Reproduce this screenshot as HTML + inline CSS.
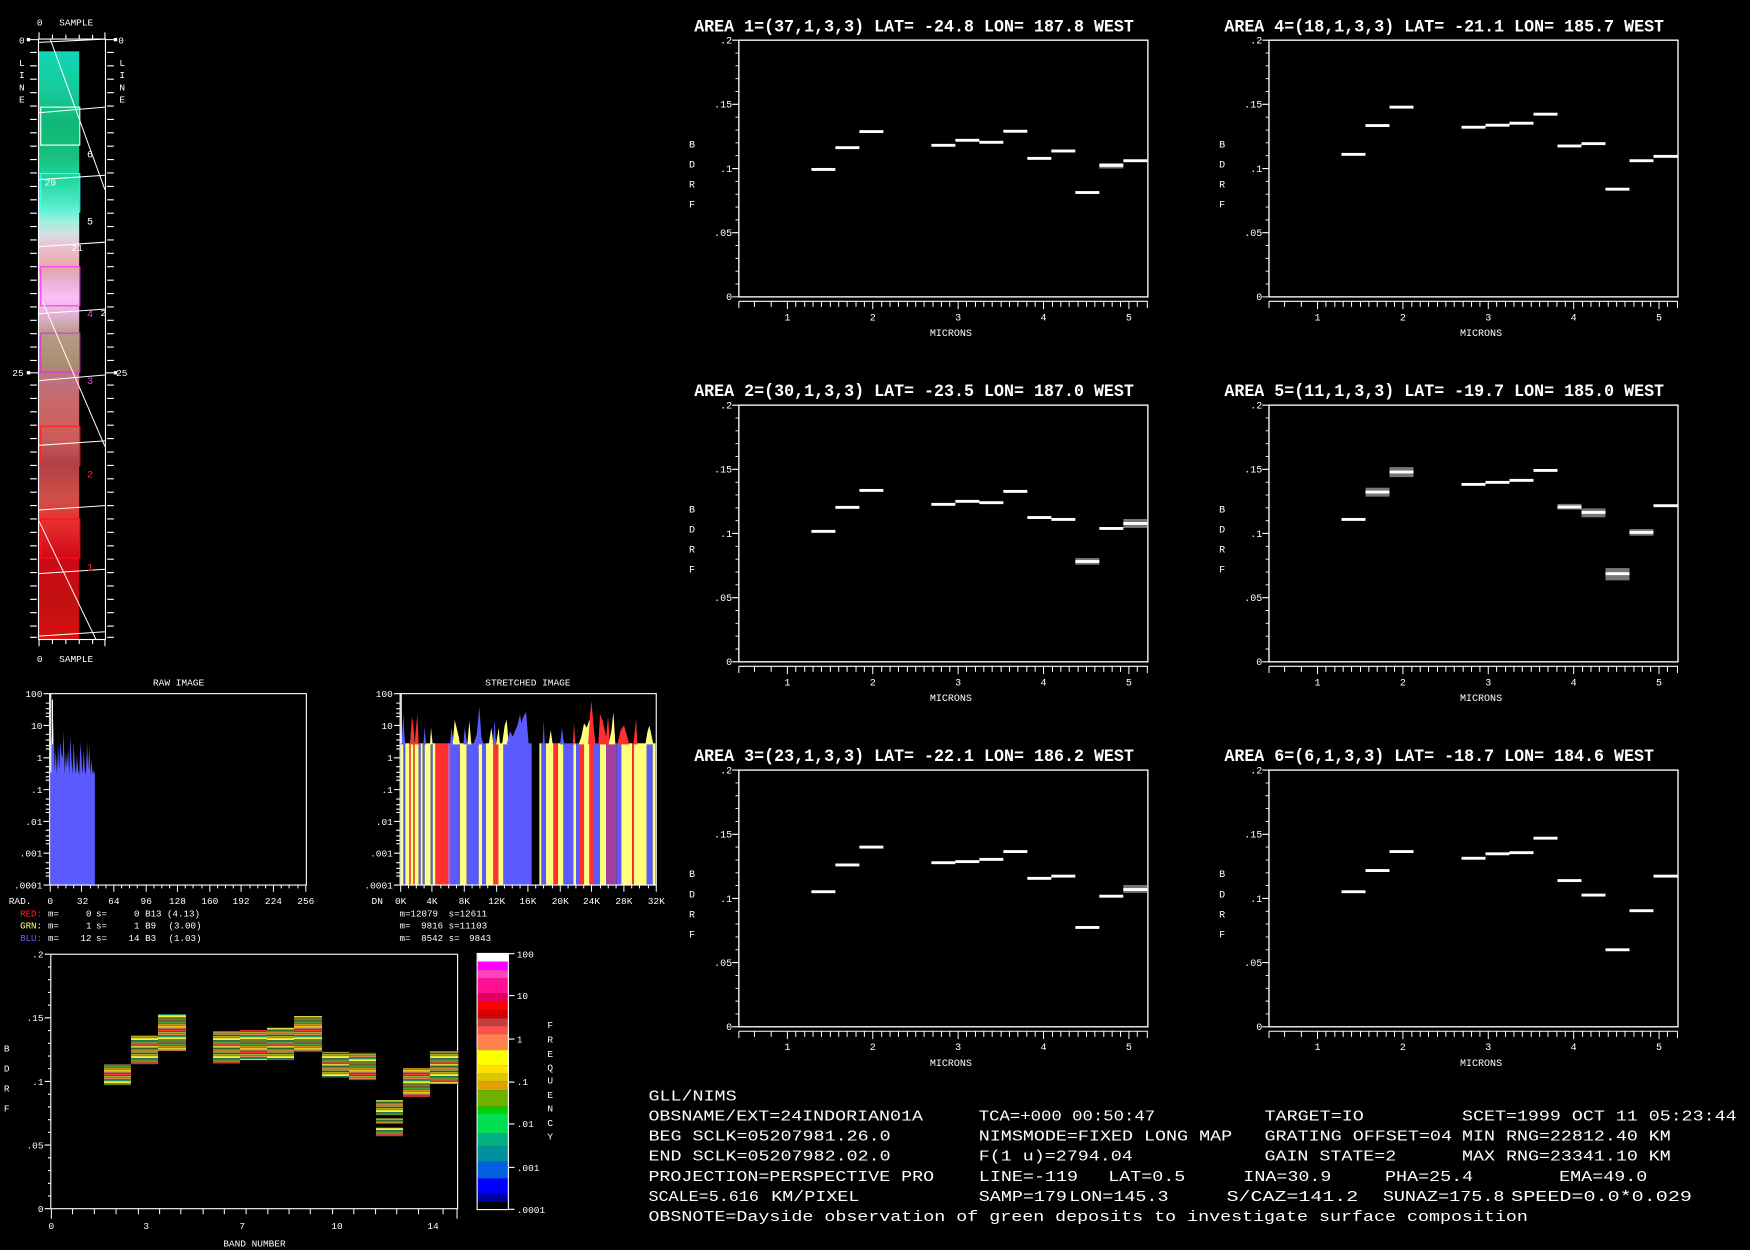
<!DOCTYPE html>
<html><head><meta charset="utf-8"><style>
html,body{margin:0;padding:0;background:#000;width:1750px;height:1250px;overflow:hidden}
svg{display:block}
text{font-family:"Liberation Mono","DejaVu Sans Mono",monospace;fill:#fff}
</style></head><body>
<svg width="1750" height="1250" viewBox="0 0 1568 1120" preserveAspectRatio="none" xmlns="http://www.w3.org/2000/svg">
<defs>
<linearGradient id="strip" x1="0" y1="46" x2="0" y2="573" gradientUnits="userSpaceOnUse">
<stop offset="0" stop-color="#10d8b8"/><stop offset="0.07" stop-color="#18c898"/><stop offset="0.12" stop-color="#10b878"/>
<stop offset="0.18" stop-color="#18c080"/><stop offset="0.22" stop-color="#20d8a0"/><stop offset="0.26" stop-color="#50ecc8"/>
<stop offset="0.29" stop-color="#a0f0e0"/><stop offset="0.31" stop-color="#d0e0e0"/><stop offset="0.33" stop-color="#f0c0d0"/>
<stop offset="0.37" stop-color="#e0a8a8"/><stop offset="0.39" stop-color="#e8b0d0"/><stop offset="0.42" stop-color="#fcc0f8"/>
<stop offset="0.45" stop-color="#e0b0d0"/><stop offset="0.48" stop-color="#b89a88"/><stop offset="0.53" stop-color="#a89070"/>
<stop offset="0.56" stop-color="#c07080"/><stop offset="0.6" stop-color="#c86868"/><stop offset="0.66" stop-color="#cc5c58"/>
<stop offset="0.7" stop-color="#b04048"/><stop offset="0.76" stop-color="#d05048"/><stop offset="0.8" stop-color="#e83030"/>
<stop offset="0.86" stop-color="#d00818"/><stop offset="0.93" stop-color="#c01010"/><stop offset="1" stop-color="#d81010"/>
</linearGradient>
<pattern id="stA" width="100" height="66" patternUnits="userSpaceOnUse">
<rect width="100" height="66" fill="#000"/>
<rect y="0" width="100" height="5" fill="#50b040"/><rect y="6" width="100" height="5" fill="#e0a020"/>
<rect y="12" width="100" height="5" fill="#ffe020"/><rect y="18" width="100" height="4" fill="#c08060"/>
<rect y="23" width="100" height="5" fill="#ff3030"/><rect y="29" width="100" height="4" fill="#a0c040"/>
<rect y="34" width="100" height="5" fill="#f09050"/><rect y="40" width="100" height="4" fill="#20a080"/>
<rect y="45" width="100" height="6" fill="#ffff40"/><rect y="52" width="100" height="4" fill="#80a030"/>
<rect y="57" width="100" height="4" fill="#e06040"/><rect y="62" width="100" height="3" fill="#30c060"/>
</pattern>
<pattern id="stB" width="100" height="54" patternUnits="userSpaceOnUse">
<rect width="100" height="54" fill="#000"/>
<rect y="0" width="100" height="5" fill="#c0c020"/><rect y="6" width="100" height="6" fill="#ffee30"/>
<rect y="13" width="100" height="4" fill="#20a090"/><rect y="18" width="100" height="5" fill="#70b030"/>
<rect y="24" width="100" height="4" fill="#ff5050"/><rect y="29" width="100" height="6" fill="#d8d040"/>
<rect y="37" width="100" height="4" fill="#40c040"/><rect y="42" width="100" height="5" fill="#f0a040"/>
<rect y="48" width="100" height="4" fill="#a0a060"/>
</pattern>
<g id="axes">
<rect x="662" y="36" width="366.5" height="230" fill="none" stroke="#fff" stroke-width="1.2"/>
<path d="M656 36H662M656 93.5H662M656 151H662M656 208.5H662M656 266H662" stroke="#fff" stroke-width="1"/>
<path d="M659 47.5H662M659 59H662M659 70.5H662M659 82H662M659 105H662M659 116.5H662M659 128H662M659 139.5H662M659 162.5H662M659 174H662M659 185.5H662M659 197H662M659 220H662M659 231.5H662M659 243H662M659 254.5H662" stroke="#fff" stroke-width="0.8"/>
<text x="656" y="39" font-size="9" text-anchor="end">.2</text>
<text x="656" y="96.5" font-size="9" text-anchor="end">.15</text>
<text x="656" y="154" font-size="9" text-anchor="end">.1</text>
<text x="656" y="211.5" font-size="9" text-anchor="end">.05</text>
<text x="656" y="269" font-size="9" text-anchor="end">0</text>
<text x="620" y="132" font-size="9" text-anchor="middle">B</text>
<text x="620" y="150" font-size="9" text-anchor="middle">D</text>
<text x="620" y="168" font-size="9" text-anchor="middle">R</text>
<text x="620" y="186" font-size="9" text-anchor="middle">F</text>
<path d="M662 270H1028.5" stroke="#fff" stroke-width="1"/>
<path d="M662 270v6M676 270v5M691 270v5M705.5 270v7M713 270v5M721 270v5M728.5 270v5M736 270v5M744 270v5M751.5 270v5M759 270v5M767 270v5M774.5 270v5M782 270v7M790 270v5M797.5 270v5M805 270v5M813 270v5M820.5 270v5M828 270v5M836 270v5M843.5 270v5M851 270v5M858.5 270v7M866 270v5M874 270v5M881.5 270v5M889 270v5M897 270v5M904.5 270v5M912 270v5M920 270v5M927.5 270v5M935 270v7M943 270v5M950.5 270v5M958 270v5M966 270v5M973.5 270v5M981 270v5M989 270v5M996.5 270v5M1004 270v5M1011.5 270v7M1019 270v5M1028 270v6" stroke="#fff" stroke-width="0.9"/>
<text x="705.5" y="287" font-size="9" text-anchor="middle">1</text>
<text x="782" y="287" font-size="9" text-anchor="middle">2</text>
<text x="858.5" y="287" font-size="9" text-anchor="middle">3</text>
<text x="935" y="287" font-size="9" text-anchor="middle">4</text>
<text x="1011.5" y="287" font-size="9" text-anchor="middle">5</text>
<text x="852" y="301" font-size="9" text-anchor="middle">MICRONS</text>
</g>
</defs>
<rect width="1568" height="1120" fill="#000"/>

<!-- LEFT IMAGE STRIP -->
<rect x="34.5" y="46" width="36.5" height="527" fill="url(#strip)"/>
<rect x="34.5" y="35" width="60" height="538" fill="none" stroke="#fff" stroke-width="1"/>
<path d="M35 29V35M47 31v4M59 31v4M71 31v4M83 31v4M94 29v6M35 573v6M47 573v4M59 573v4M71 573v4M83 573v4M94 573v6" stroke="#fff" stroke-width="1"/>
<g stroke="#fff" stroke-width="1">
<path d="M27 47H33M27 59H33M27 71H33M27 83H33M27 95H33M27 107H33M27 119H33M27 131H33M27 143H33M27 155H33M27 167H33M27 179H33M27 191H33M27 203H33M27 215H33M27 227H33M27 239H33M27 251H33M27 263H33M27 275H33M27 287H33M27 299H33M27 311H33M27 323H33M27 345H33M27 357H33M27 369H33M27 381H33M27 393H33M27 405H33M27 417H33M27 429H33M27 441H33M27 453H33M27 465H33M27 477H33M27 489H33M27 501H33M27 513H33M27 525H33M27 537H33M27 549H33M27 561H33M27 571H33"/>
<path d="M96 47H102M96 59H102M96 71H102M96 83H102M96 95H102M96 107H102M96 119H102M96 131H102M96 143H102M96 155H102M96 167H102M96 179H102M96 191H102M96 203H102M96 215H102M96 227H102M96 239H102M96 251H102M96 263H102M96 275H102M96 287H102M96 299H102M96 311H102M96 323H102M96 345H102M96 357H102M96 369H102M96 381H102M96 393H102M96 405H102M96 417H102M96 429H102M96 441H102M96 453H102M96 465H102M96 477H102M96 489H102M96 501H102M96 513H102M96 525H102M96 537H102M96 549H102M96 561H102M96 571H102"/>
<path d="M24 35.5H34M95 35.5H105M24 334H34M95 334H105"/>
</g>
<rect x="24" y="34" width="3" height="3" fill="#fff"/><rect x="102" y="34" width="3" height="3" fill="#fff"/>
<rect x="24" y="332.5" width="3" height="3" fill="#fff"/><rect x="102" y="332.5" width="3" height="3" fill="#fff"/>
<g fill="none" stroke-width="1">
<rect x="36.5" y="96" width="35" height="34" stroke="#fff"/>
<rect x="36.5" y="155.5" width="35" height="34.5" stroke="#40ffff"/>
<rect x="36.5" y="239" width="35" height="35" stroke="#ff30ff"/>
<rect x="36.5" y="298.5" width="35" height="35" stroke="#e030e0"/>
<rect x="36.5" y="382" width="35" height="35" stroke="#ff2020"/>
<rect x="36.5" y="465" width="35" height="35" stroke="#ff1010"/>
</g>
<g stroke="#fff" stroke-width="0.9" fill="none">
<path d="M45 35L94 170M38 270L94 400M35 467L86 573"/>
<path d="M35 38L94 35M35 101L94 96M35 161L94 157M35 221L94 217M35 281L94 277M35 341L94 336M35 399L94 395M35 457L94 453M35 514L94 510M35 570L94 566"/>
</g>
<text x="78" y="141" font-size="9">6</text>
<text x="78" y="201" font-size="9">5</text>
<text x="78" y="284" font-size="9" style="fill:#ff40ff">4</text>
<text x="78" y="344" font-size="9" style="fill:#e040e0">3</text>
<text x="78" y="428" font-size="9" style="fill:#ff2020">2</text>
<text x="78" y="511" font-size="9" style="fill:#ff2020">1</text>
<text x="40" y="166" font-size="8.5">20</text>
<text x="64" y="225" font-size="8.5">21</text>
<text x="90" y="283" font-size="8.5">2</text>
<text x="33" y="23" font-size="8.5">0</text><text x="53" y="23" font-size="8.5">SAMPLE</text>
<text x="33" y="593" font-size="8.5">0</text><text x="53" y="593" font-size="8.5">SAMPLE</text>
<text x="17" y="39" font-size="8.5">0</text><text x="106" y="39" font-size="8.5">0</text>
<text x="11" y="337" font-size="8.5">25</text><text x="104" y="337" font-size="8.5">25</text>
<g font-size="8.5"><text x="17" y="59">L</text><text x="17" y="70">I</text><text x="17" y="81">N</text><text x="17" y="92">E</text>
<text x="107" y="59">L</text><text x="107" y="70">I</text><text x="107" y="81">N</text><text x="107" y="92">E</text></g>

<!-- RAW HISTOGRAM -->
<text x="160" y="614" font-size="8.5" text-anchor="middle">RAW IMAGE</text>
<polygon fill="#5a5aff" points="45,793 45,665 46,660 47,668 48,645 49,690 50,672 51,694 52,666 53,690 54,664 55,676 56,680 57,655 58,694 59,674 60,688 61,670 62,694 63,660 64,680 65,694 66,664 67,685 68,694 69,676 70,690 71,694 72,665 73,680 74,694 75,672 76,690 77,694 78,664 79,690 80,668 81,694 82,680 83,694 84,690 85,694 85,793"/>
<path d="M45.5 621V692M47 627v40" stroke="#fff" stroke-width="1"/>
<rect x="44.5" y="621.5" width="230" height="171.5" fill="none" stroke="#fff" stroke-width="1"/>
<path d="M39 621.5h5M39 650h5M39 679h5M39 707.5h5M39 736h5M39 764.5h5M39 793h5M41 630h3M41 635h3M41 639h3M41 642h3M41 658h3M41 663h3M41 668h3M41 671h3M41 687h3M41 692h3M41 696h3M41 699h3M41 716h3M41 721h3M41 725h3M41 728h3M41 744h3M41 749h3M41 753h3M41 756h3M41 773h3M41 778h3M41 782h3M41 785h3" stroke="#fff"/>
<g font-size="8.5" text-anchor="end"><text x="38" y="624.5">100</text><text x="38" y="653">10</text><text x="38" y="682">1</text><text x="38" y="710.5">.1</text><text x="38" y="739">.01</text><text x="38" y="767.5">.001</text><text x="38" y="796">.0001</text></g>
<path d="M45 793v6M52 793v3M59 793v3M66 793v3M73 793v6M81 793v3M88 793v3M95 793v3M102 793v6M109 793v3M116 793v3M123 793v3M131 793v6M138 793v3M145 793v3M152 793v3M159 793v6M166 793v3M173 793v3M181 793v3M188 793v6M195 793v3M202 793v3M209 793v3M216 793v6M224 793v3M231 793v3M238 793v3M245 793v6M252 793v3M259 793v3M267 793v3M274 793v6" stroke="#fff" stroke-width="0.9"/>
<g font-size="8.5" text-anchor="middle"><text x="18" y="810">RAD.</text><text x="45" y="810">0</text><text x="74" y="810">32</text><text x="102" y="810">64</text><text x="131" y="810">96</text><text x="159" y="810">128</text><text x="188" y="810">160</text><text x="216" y="810">192</text><text x="245" y="810">224</text><text x="274" y="810">256</text></g>
<g font-size="8.2">
<text x="18" y="821" style="fill:#ff2020">RED:</text><text x="43" y="821">m=</text><text x="82" y="821" text-anchor="end">0</text><text x="86" y="821">s=</text><text x="125" y="821" text-anchor="end">0</text><text x="130" y="821">B13 (4.13)</text>
<text x="18" y="832" style="fill:#ffff80">GRN:</text><text x="43" y="832">m=</text><text x="82" y="832" text-anchor="end">1</text><text x="86" y="832">s=</text><text x="125" y="832" text-anchor="end">1</text><text x="130" y="832">B9</text><text x="151" y="832">(3.00)</text>
<text x="18" y="843" style="fill:#6060ff">BLU:</text><text x="43" y="843">m=</text><text x="82" y="843" text-anchor="end">12</text><text x="86" y="843">s=</text><text x="125" y="843" text-anchor="end">14</text><text x="130" y="843">B3</text><text x="151" y="843">(1.03)</text>
</g>

<!-- STRETCHED HISTOGRAM -->
<text x="473" y="614" font-size="8.5" text-anchor="middle">STRETCHED IMAGE</text>
<g transform="translate(340.5,0) scale(0.2987,1)">
<rect x="62" y="666" width="8" height="127" fill="#ffff80"/><rect x="70" y="666" width="6" height="127" fill="#5a5aff"/>
<rect x="76" y="666" width="12" height="127" fill="#ffff80"/><rect x="88" y="666" width="4" height="127" fill="#ff3030"/>
<rect x="92" y="666" width="8" height="127" fill="#ffff80"/><rect x="100" y="666" width="4" height="127" fill="#ff3030"/>
<rect x="104" y="666" width="12" height="127" fill="#ffff80"/><rect x="116" y="666" width="6" height="127" fill="#5a5aff"/>
<rect x="122" y="666" width="6" height="127" fill="#ffff80"/><rect x="128" y="666" width="6" height="127" fill="#5a5aff"/>
<rect x="134" y="666" width="18" height="127" fill="#ffff80"/><rect x="152" y="666" width="6" height="127" fill="#5a5aff"/>
<rect x="158" y="666" width="8" height="127" fill="#ffff80"/><rect x="166" y="666" width="38" height="127" fill="#ff3030"/>
<rect x="204" y="666" width="8" height="127" fill="#c060c0"/><rect x="212" y="666" width="28" height="127" fill="#5a5aff"/>
<rect x="240" y="666" width="20" height="127" fill="#ffff80"/><rect x="260" y="666" width="36" height="127" fill="#5a5aff"/>
<rect x="296" y="666" width="10" height="127" fill="#ffff80"/><rect x="306" y="666" width="12" height="127" fill="#5a5aff"/>
<rect x="318" y="666" width="22" height="127" fill="#ffff80"/><rect x="340" y="666" width="15" height="127" fill="#ff3030"/>
<rect x="355" y="666" width="15" height="127" fill="#ffff80"/><rect x="370" y="666" width="85" height="127" fill="#5a5aff"/>
<rect x="478" y="666" width="6" height="127" fill="#ffff80"/><rect x="484" y="666" width="14" height="127" fill="#5a5aff"/>
<rect x="498" y="666" width="22" height="127" fill="#ffff80"/><rect x="520" y="666" width="14" height="127" fill="#ff3030"/>
<rect x="534" y="666" width="16" height="127" fill="#ffff80"/><rect x="550" y="666" width="30" height="127" fill="#5a5aff"/>
<rect x="580" y="666" width="8" height="127" fill="#ffff80"/><rect x="588" y="666" width="12" height="127" fill="#5a5aff"/>
<rect x="600" y="666" width="12" height="127" fill="#ff3030"/><rect x="612" y="666" width="16" height="127" fill="#ffff80"/>
<rect x="628" y="666" width="14" height="127" fill="#ff3030"/><rect x="642" y="666" width="18" height="127" fill="#5a5aff"/>
<rect x="660" y="666" width="18" height="127" fill="#ffff80"/><rect x="678" y="666" width="32" height="127" fill="#a040a0"/>
<rect x="710" y="666" width="14" height="127" fill="#5a5aff"/><rect x="724" y="666" width="32" height="127" fill="#ffff80"/>
<rect x="756" y="666" width="6" height="127" fill="#ff3030"/><rect x="762" y="666" width="38" height="127" fill="#ffff80"/>
<rect x="800" y="666" width="18" height="127" fill="#5a5aff"/><rect x="818" y="666" width="8" height="127" fill="#ffff80"/>
<polygon fill="#5a5aff" points="62,667 64,628 66,660 70,640 74,662 76,667"/>
<polygon fill="#ff3030" points="90,667 96,642 100,650 104,667"/>
<polygon fill="#ff3030" points="104,667 108,652 112,640 116,667"/>
<polygon fill="#5a5aff" points="130,667 134,651 138,667"/>
<polygon fill="#ffff80" points="150,667 153,652 158,667"/>
<polygon fill="#5a5aff" points="210,667 214,652 218,660 222,667"/>
<polygon fill="#ffff80" points="218,667 224,645 236,660 240,667"/>
<polygon fill="#5a5aff" points="250,667 254,652 258,660 262,667"/>
<polygon fill="#ffff80" points="262,667 268,646 274,667"/>
<polygon fill="#5a5aff" points="280,667 290,658 298,633 304,660 310,667"/>
<polygon fill="#ffff80" points="326,667 334,652 340,667"/>
<polygon fill="#5a5aff" points="338,667 344,645 348,667"/>
<polygon fill="#ffff80" points="348,667 356,652 360,667"/>
<polygon fill="#ffff80" points="366,667 374,650 380,645 386,667"/>
<polygon fill="#5a5aff" points="380,667 390,655 398,660 412,650 420,640 424,648 430,642 438,638 446,667"/>
<polygon fill="#5a5aff" points="488,667 491,645 494,667"/>
<polygon fill="#ffff80" points="506,667 512,654 518,667"/>
<polygon fill="#5a5aff" points="540,667 546,652 552,667"/>
<polygon fill="#ff3030" points="578,667 582,648 586,667"/>
<polygon fill="#ffff80" points="596,667 604,660 612,648 620,652 628,645 636,667"/>
<polygon fill="#ff3030" points="624,667 630,640 634,628 640,648 646,667"/>
<polygon fill="#ff3030" points="655,667 660,640 668,646 678,660 684,642 690,667"/>
<polygon fill="#ffff80" points="686,667 694,655 700,638 706,667"/>
<polygon fill="#ff3030" points="712,667 722,654 732,650 748,667"/>
<polygon fill="#ff3030" points="760,667 768,644 772,667"/>
<polygon fill="#ffff80" points="796,667 802,656 808,650 820,667"/>
</g>
<rect x="358.5" y="621.5" width="229.5" height="171.5" fill="none" stroke="#fff" stroke-width="1"/>
<path d="M359.5 621V666" stroke="#fff" stroke-width="1"/>
<path d="M353 621.5h5M353 650h5M353 679h5M353 707.5h5M353 736h5M353 764.5h5M353 793h5M355 630h3M355 635h3M355 639h3M355 642h3M355 658h3M355 663h3M355 668h3M355 671h3M355 687h3M355 692h3M355 696h3M355 699h3M355 716h3M355 721h3M355 725h3M355 728h3M355 744h3M355 749h3M355 753h3M355 756h3M355 773h3M355 778h3M355 782h3M355 785h3" stroke="#fff"/>
<g font-size="8.5" text-anchor="end"><text x="352" y="624.5">100</text><text x="352" y="653">10</text><text x="352" y="682">1</text><text x="352" y="710.5">.1</text><text x="352" y="739">.01</text><text x="352" y="767.5">.001</text><text x="352" y="796">.0001</text></g>
<path d="M359 793v6M366 793v3M373 793v3M380 793v3M387 793v6M395 793v3M402 793v3M409 793v3M416 793v6M423 793v3M430 793v3M437 793v3M445 793v6M452 793v3M459 793v3M466 793v3M473 793v6M480 793v3M487 793v3M495 793v3M502 793v6M509 793v3M516 793v3M523 793v3M530 793v6M538 793v3M545 793v3M552 793v3M559 793v6M566 793v3M573 793v3M581 793v3M588 793v6" stroke="#fff" stroke-width="0.9"/>
<g font-size="8.5" text-anchor="middle"><text x="338" y="810">DN</text><text x="359" y="810">0K</text><text x="387" y="810">4K</text><text x="416" y="810">8K</text><text x="445" y="810">12K</text><text x="473" y="810">16K</text><text x="502" y="810">20K</text><text x="530" y="810">24K</text><text x="559" y="810">28K</text><text x="588" y="810">32K</text></g>
<g font-size="8.2">
<text x="358" y="821">m=12079</text><text x="402" y="821">s=12611</text>
<text x="358" y="832">m=</text><text x="397" y="832" text-anchor="end">9816</text><text x="402" y="832">s=11103</text>
<text x="358" y="843">m=</text><text x="397" y="843" text-anchor="end">8542</text><text x="402" y="843">s=</text><text x="440" y="843" text-anchor="end">9843</text>
</g>

<!-- BAND CHART -->
<rect x="45.5" y="855" width="364.5" height="228" fill="none" stroke="#fff" stroke-width="1"/>
<g transform="translate(89.6,896.1) scale(0.2987)">
<rect x="12" y="192" width="81" height="63" fill="url(#stA)"/>
<rect x="93" y="105" width="81" height="87" fill="url(#stB)"/>
<rect x="174" y="42" width="84" height="111" fill="url(#stA)"/>
<rect x="339" y="93" width="81" height="97" fill="url(#stB)"/>
<rect x="420" y="90" width="81" height="90" fill="url(#stA)"/>
<rect x="501" y="82" width="81" height="98" fill="url(#stB)"/>
<rect x="582" y="48" width="84" height="107" fill="url(#stA)"/>
<rect x="666" y="155" width="81" height="77" fill="url(#stB)"/>
<rect x="747" y="158" width="81" height="82" fill="url(#stA)"/>
<rect x="828" y="300" width="81" height="108" fill="url(#stB)"/>
<rect x="909" y="204" width="81" height="86" fill="url(#stA)"/>
<rect x="990" y="153" width="85" height="99" fill="url(#stB)"/>
<rect x="828" y="345" width="81" height="10" fill="#000"/><rect x="828" y="370" width="81" height="12" fill="#000"/>
</g>
<path d="M40 855h5M40 912h5M40 969h5M40 1026h5M40 1083h5M43 866.4h2M43 877.8h2M43 889.2h2M43 900.6h2M43 923.4h2M43 934.8h2M43 946.2h2M43 957.6h2M43 980.4h2M43 991.8h2M43 1003.2h2M43 1014.6h2M43 1037.4h2M43 1048.8h2M43 1060.2h2M43 1071.6h2" stroke="#fff"/>
<g font-size="8.5" text-anchor="end"><text x="39" y="858">.2</text><text x="39" y="915">.15</text><text x="39" y="972">.1</text><text x="39" y="1029">.05</text><text x="39" y="1086">0</text></g>
<g font-size="8.5" text-anchor="middle"><text x="6" y="942">B</text><text x="6" y="960">D</text><text x="6" y="978">R</text><text x="6" y="996">F</text></g>
<path d="M46 1083v9M65 1083v5M84.5 1083v5M104 1083v5M124 1083v5M143 1083v5M162 1083v5M182 1083v5M201 1083v5M220.5 1083v5M240 1083v5M259 1083v5M278 1083v5M298 1083v5M317 1083v5M336.5 1083v5M355.5 1083v5M375 1083v5M397 1083v5M409.5 1083v9" stroke="#fff" stroke-width="0.9"/>
<g font-size="8.5" text-anchor="middle"><text x="46" y="1101">0</text><text x="131" y="1101">3</text><text x="217" y="1101">7</text><text x="302" y="1101">10</text><text x="388" y="1101">14</text><text x="228" y="1117">BAND NUMBER</text></g>

<!-- COLOR BAR -->
<g transform="translate(0,842.3) scale(1,0.2987)">
<rect x="428" y="40" width="28" height="25" fill="#ffffff"/>
<rect x="428" y="65" width="28" height="25" fill="#ff00ff"/>
<rect x="428" y="90" width="28" height="25" fill="#ff40c0"/>
<rect x="428" y="115" width="28" height="45" fill="#ff1090"/>
<rect x="428" y="160" width="28" height="25" fill="#e00060"/>
<rect x="428" y="185" width="28" height="25" fill="#ff0000"/>
<rect x="428" y="210" width="28" height="25" fill="#d80000"/>
<rect x="428" y="235" width="28" height="23" fill="#c04040"/>
<rect x="428" y="258" width="28" height="24" fill="#ff5050"/>
<rect x="428" y="282" width="28" height="48" fill="#ff8050"/>
<rect x="428" y="330" width="28" height="45" fill="#ffff00"/>
<rect x="428" y="375" width="28" height="25" fill="#ffe000"/>
<rect x="428" y="400" width="28" height="25" fill="#d8c800"/>
<rect x="428" y="425" width="28" height="25" fill="#e0a000"/>
<rect x="428" y="450" width="28" height="50" fill="#70b000"/>
<rect x="428" y="500" width="28" height="20" fill="#00d000"/>
<rect x="428" y="520" width="28" height="60" fill="#00e050"/>
<rect x="428" y="580" width="28" height="40" fill="#00b080"/>
<rect x="428" y="620" width="28" height="45" fill="#0090a0"/>
<rect x="428" y="665" width="28" height="50" fill="#0060e0"/>
<rect x="428" y="715" width="28" height="45" fill="#0000ff"/>
<rect x="428" y="760" width="28" height="25" fill="#0000a0"/>
</g>
<rect x="427.5" y="854.3" width="28" height="229.5" fill="none" stroke="#fff" stroke-width="1"/>
<path d="M456 854.5h5M456 892h5M456 931h5M456 969.5h5M456 1007h5M456 1046h5M456 1083.5h5" stroke="#fff"/>
<g font-size="8.5"><text x="463" y="858">100</text><text x="463" y="895">10</text><text x="463" y="934">1</text><text x="463" y="972">.1</text><text x="463" y="1010">.01</text><text x="463" y="1049">.001</text><text x="463" y="1087">.0001</text></g>
<g font-size="8.5" text-anchor="middle"><text x="493" y="921">F</text><text x="493" y="934">R</text><text x="493" y="947">E</text><text x="493" y="959">Q</text><text x="493" y="971">U</text><text x="493" y="984">E</text><text x="493" y="996">N</text><text x="493" y="1009">C</text><text x="493" y="1021">Y</text></g>

<!-- AREA CHARTS -->
<g font-size="16" font-weight="bold">
<text x="622" y="28" textLength="394" lengthAdjust="spacingAndGlyphs">AREA 1=(37,1,3,3) LAT= -24.8 LON= 187.8 WEST</text>
<text x="1097" y="28" textLength="394" lengthAdjust="spacingAndGlyphs">AREA 4=(18,1,3,3) LAT= -21.1 LON= 185.7 WEST</text>
<text x="622" y="355" textLength="394" lengthAdjust="spacingAndGlyphs">AREA 2=(30,1,3,3) LAT= -23.5 LON= 187.0 WEST</text>
<text x="1097" y="355" textLength="394" lengthAdjust="spacingAndGlyphs">AREA 5=(11,1,3,3) LAT= -19.7 LON= 185.0 WEST</text>
<text x="622" y="682" textLength="394" lengthAdjust="spacingAndGlyphs">AREA 3=(23,1,3,3) LAT= -22.1 LON= 186.2 WEST</text>
<text x="1097" y="682" textLength="385" lengthAdjust="spacingAndGlyphs">AREA 6=(6,1,3,3) LAT= -18.7 LON= 184.6 WEST</text>
</g>
<use href="#axes"/>
<use href="#axes" transform="translate(475,0)"/>
<use href="#axes" transform="translate(0,327)"/>
<use href="#axes" transform="translate(475,327)"/>
<use href="#axes" transform="translate(0,654)"/>
<use href="#axes" transform="translate(475,654)"/>

<g fill="#fff">
<rect x="985" y="146" width="21.5" height="5" fill="#777"/>
<rect x="727" y="150.5" width="21.5" height="2.6"/><rect x="748.5" y="131" width="21.5" height="2.6"/><rect x="770" y="116.6" width="21.5" height="2.6"/>
<rect x="834.5" y="128.9" width="21.5" height="2.6"/><rect x="856" y="124.4" width="21.5" height="2.6"/><rect x="877.5" y="126.2" width="21.5" height="2.6"/><rect x="899" y="116.3" width="21.5" height="2.6"/>
<rect x="920.5" y="140.6" width="21.5" height="2.6"/><rect x="942" y="134" width="21.5" height="2.6"/><rect x="963.5" y="171.2" width="21.5" height="2.6"/><rect x="985" y="146.9" width="21.5" height="2.6"/><rect x="1006.5" y="142.7" width="21.5" height="2.6"/>
</g>
<g fill="#fff" transform="translate(475,0)">
<rect x="727" y="137" width="21.5" height="2.6"/><rect x="748.5" y="111.2" width="21.5" height="2.6"/><rect x="770" y="94.7" width="21.5" height="2.6"/>
<rect x="834.5" y="112.7" width="21.5" height="2.6"/><rect x="856" y="110.9" width="21.5" height="2.6"/><rect x="877.5" y="109.1" width="21.5" height="2.6"/><rect x="899" y="101" width="21.5" height="2.6"/>
<rect x="920.5" y="129.5" width="21.5" height="2.6"/><rect x="942" y="127.4" width="21.5" height="2.6"/><rect x="963.5" y="168.2" width="21.5" height="2.6"/><rect x="985" y="142.7" width="21.5" height="2.6"/><rect x="1006.5" y="138.8" width="21.5" height="2.6"/>
</g>
<g fill="#fff" transform="translate(0,327)">
<rect x="963.5" y="173" width="21.5" height="6" fill="#777"/><rect x="1006.5" y="138" width="21.5" height="8" fill="#777"/>
<rect x="727" y="147.8" width="21.5" height="2.6"/><rect x="748.5" y="126.3" width="21.5" height="2.6"/><rect x="770" y="111.1" width="21.5" height="2.6"/>
<rect x="834.5" y="123.6" width="21.5" height="2.6"/><rect x="856" y="120.9" width="21.5" height="2.6"/><rect x="877.5" y="122.1" width="21.5" height="2.6"/><rect x="899" y="112" width="21.5" height="2.6"/>
<rect x="920.5" y="135.4" width="21.5" height="2.6"/><rect x="942" y="137.1" width="21.5" height="2.6"/><rect x="963.5" y="174.8" width="21.5" height="2.6"/><rect x="985" y="145.2" width="21.5" height="2.6"/><rect x="1006.5" y="140.7" width="21.5" height="2.6"/>
</g>
<g fill="#fff" transform="translate(475,327)">
<rect x="748.5" y="110" width="21.5" height="8" fill="#777"/><rect x="770" y="91.5" width="21.5" height="9" fill="#777"/>
<rect x="920.5" y="124.5" width="21.5" height="5" fill="#777"/><rect x="942" y="128.5" width="21.5" height="8" fill="#777"/>
<rect x="963.5" y="182" width="21.5" height="11" fill="#777"/><rect x="985" y="147" width="21.5" height="6" fill="#777"/>
<rect x="727" y="137.1" width="21.5" height="2.6"/><rect x="748.5" y="112.6" width="21.5" height="2.6"/><rect x="770" y="94.6" width="21.5" height="2.6"/>
<rect x="834.5" y="105.7" width="21.5" height="2.6"/><rect x="856" y="103.9" width="21.5" height="2.6"/><rect x="877.5" y="102.1" width="21.5" height="2.6"/><rect x="899" y="93.2" width="21.5" height="2.6"/>
<rect x="920.5" y="126" width="21.5" height="2.6"/><rect x="942" y="130.8" width="21.5" height="2.6"/><rect x="963.5" y="185.7" width="21.5" height="2.6"/><rect x="985" y="148.7" width="21.5" height="2.6"/><rect x="1006.5" y="124.8" width="21.5" height="2.6"/>
</g>
<g fill="#fff" transform="translate(0,654)">
<rect x="1006.5" y="139" width="21.5" height="7" fill="#777"/>
<rect x="727" y="143.7" width="21.5" height="2.6"/><rect x="748.5" y="119.7" width="21.5" height="2.6"/><rect x="770" y="103.7" width="21.5" height="2.6"/>
<rect x="834.5" y="117.7" width="21.5" height="2.6"/><rect x="856" y="116.7" width="21.5" height="2.6"/><rect x="877.5" y="114.7" width="21.5" height="2.6"/><rect x="899" y="107.7" width="21.5" height="2.6"/>
<rect x="920.5" y="131.7" width="21.5" height="2.6"/><rect x="942" y="129.7" width="21.5" height="2.6"/><rect x="963.5" y="175.7" width="21.5" height="2.6"/><rect x="985" y="147.7" width="21.5" height="2.6"/><rect x="1006.5" y="141.7" width="21.5" height="2.6"/>
</g>
<g fill="#fff" transform="translate(475,654)">
<rect x="727" y="143.7" width="21.5" height="2.6"/><rect x="748.5" y="124.7" width="21.5" height="2.6"/><rect x="770" y="107.7" width="21.5" height="2.6"/>
<rect x="834.5" y="113.7" width="21.5" height="2.6"/><rect x="856" y="109.7" width="21.5" height="2.6"/><rect x="877.5" y="108.7" width="21.5" height="2.6"/><rect x="899" y="95.7" width="21.5" height="2.6"/>
<rect x="920.5" y="133.7" width="21.5" height="2.6"/><rect x="942" y="146.7" width="21.5" height="2.6"/><rect x="963.5" y="195.7" width="21.5" height="2.6"/><rect x="985" y="160.7" width="21.5" height="2.6"/><rect x="1006.5" y="129.7" width="21.5" height="2.6"/>
</g>

<!-- INFO TEXT -->
<g font-size="13.5">
<text x="581" y="986" textLength="79" lengthAdjust="spacingAndGlyphs">GLL/NIMS</text>
<text x="581" y="1004" textLength="246" lengthAdjust="spacingAndGlyphs">OBSNAME/EXT=24INDORIAN01A</text>
<text x="877" y="1004" textLength="158" lengthAdjust="spacingAndGlyphs">TCA=+000 00:50:47</text>
<text x="1133" y="1004" textLength="89" lengthAdjust="spacingAndGlyphs">TARGET=IO</text>
<text x="1310" y="1004" textLength="246" lengthAdjust="spacingAndGlyphs">SCET=1999 OCT 11 05:23:44</text>
<text x="581" y="1022" textLength="217" lengthAdjust="spacingAndGlyphs">BEG SCLK=05207981.26.0</text>
<text x="877" y="1022" textLength="227" lengthAdjust="spacingAndGlyphs">NIMSMODE=FIXED LONG MAP</text>
<text x="1133" y="1022" textLength="168" lengthAdjust="spacingAndGlyphs">GRATING OFFSET=04</text>
<text x="1310" y="1022" textLength="187" lengthAdjust="spacingAndGlyphs">MIN RNG=22812.40 KM</text>
<text x="581" y="1040" textLength="217" lengthAdjust="spacingAndGlyphs">END SCLK=05207982.02.0</text>
<text x="877" y="1040" textLength="138" lengthAdjust="spacingAndGlyphs">F(1 u)=2794.04</text>
<text x="1133" y="1040" textLength="118" lengthAdjust="spacingAndGlyphs">GAIN STATE=2</text>
<text x="1310" y="1040" textLength="187" lengthAdjust="spacingAndGlyphs">MAX RNG=23341.10 KM</text>
<text x="581" y="1058" textLength="256" lengthAdjust="spacingAndGlyphs">PROJECTION=PERSPECTIVE PRO</text>
<text x="877" y="1058" textLength="89" lengthAdjust="spacingAndGlyphs">LINE=-119</text>
<text x="993" y="1058" textLength="69" lengthAdjust="spacingAndGlyphs">LAT=0.5</text>
<text x="1114" y="1058" textLength="79" lengthAdjust="spacingAndGlyphs">INA=30.9</text>
<text x="1241" y="1058" textLength="79" lengthAdjust="spacingAndGlyphs">PHA=25.4</text>
<text x="1397" y="1058" textLength="79" lengthAdjust="spacingAndGlyphs">EMA=49.0</text>
<text x="581" y="1076" textLength="99" lengthAdjust="spacingAndGlyphs">SCALE=5.616</text>
<text x="691" y="1076" textLength="79" lengthAdjust="spacingAndGlyphs">KM/PIXEL</text>
<text x="877" y="1076" textLength="79" lengthAdjust="spacingAndGlyphs">SAMP=179</text>
<text x="958" y="1076" textLength="89" lengthAdjust="spacingAndGlyphs">LON=145.3</text>
<text x="1099" y="1076" textLength="118" lengthAdjust="spacingAndGlyphs">S/CAZ=141.2</text>
<text x="1239" y="1076" textLength="109" lengthAdjust="spacingAndGlyphs">SUNAZ=175.8</text>
<text x="1354" y="1076" textLength="162" lengthAdjust="spacingAndGlyphs">SPEED=0.0*0.029</text>
<text x="581" y="1094" textLength="788" lengthAdjust="spacingAndGlyphs">OBSNOTE=Dayside observation of green deposits to investigate surface composition</text>
</g>
</svg>
</body></html>
